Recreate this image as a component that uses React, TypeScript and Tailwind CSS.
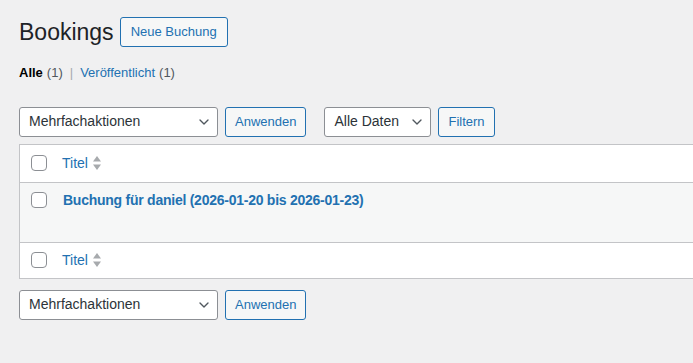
import { ChevronDown } from 'lucide-react'

const font = { fontFamily: '"Liberation Sans", Arial, sans-serif' }

function Select({ label, width }: { label: string; width: string }) {
  return (
    <div
      className={`${width} h-[30px] flex items-center justify-between bg-white border border-[#8c8f94] rounded-[3px] pl-[9px] pr-[5px] text-[14px] text-[#2c3338]`}
    >
      <span>{label}</span>
      <ChevronDown size={16} strokeWidth={2} className="text-[#50575e]" />
    </div>
  )
}

function Button({ label }: { label: string }) {
  return (
    <div className="h-[30px] flex items-center px-[9px] border border-[#2271b1] rounded-[3px] bg-[#f6f7f7] text-[13px] text-[#2271b1]">
      {label}
    </div>
  )
}

function Checkbox() {
  return <div className="w-4 h-4 rounded-[4px] border border-[#8c8f94] bg-white shrink-0" />
}

function SortIcon() {
  return (
    <svg width="10" height="16" viewBox="0 0 10 16" className="ml-[4px]">
      <path d="M5 1 L9 6.5 H1 Z" fill="#a7aaad" />
      <path d="M5 15 L9 9.5 H1 Z" fill="#a7aaad" />
    </svg>
  )
}

function HeaderRow({ top }: { top: boolean }) {
  return (
    <div
      className={`${top ? 'h-[38px] border-b' : 'h-[36px] border-t'} flex items-center pl-[11px] bg-white border-[#c3c4c7]`}
    >
      <Checkbox />
      <span className="ml-[15px] text-[14px] text-[#2271b1]">Titel</span>
      <SortIcon />
    </div>
  )
}

export default function App() {
  return (
    <div className="w-[693px] h-[363px] overflow-hidden bg-[#f0f0f1] text-[#1d2327]" style={font}>
      <div className="pl-[19px] pt-[17px]">
        <div className="flex items-center">
          <h1 className="text-[23px] leading-[29px] text-[#1d2327]">Bookings</h1>
          <div className="ml-[6px] h-[30px] flex items-center px-[10px] border border-[#2271b1] rounded-[3px] bg-[#f6f7f7] text-[13px] text-[#2271b1]">
            Neue Buchung
          </div>
        </div>

        <div className="mt-[16px] text-[13px] flex items-center">
          <span className="font-bold text-black">Alle</span>
          <span className="ml-1 text-[#50575e]">(1)</span>
          <span className="mx-[7px] text-[#a7aaad]">|</span>
          <span className="text-[#2271b1]">Veröffentlicht</span>
          <span className="ml-1 text-[#50575e]">(1)</span>
        </div>

        <div className="mt-[24px] flex items-center">
          <Select label="Mehrfachaktionen" width="w-[199px]" />
          <div className="ml-[7px]">
            <Button label="Anwenden" />
          </div>
          <div className="ml-[18px]">
            <Select label="Alle Daten" width="w-[107px]" />
          </div>
          <div className="ml-[7px]">
            <Button label="Filtern" />
          </div>
        </div>

        <div className="mt-[7px] w-[700px] border border-[#c3c4c7] bg-white">
          <HeaderRow top />
          <div className="h-[59px] bg-[#f6f7f7] flex items-start pl-[11px] pt-[9px]">
            <Checkbox />
            <span className="ml-[16px] -mt-[1px] text-[14px] font-bold tracking-[-0.25px] text-[#2271b1] leading-[18px]">
              Buchung für daniel (2026-01-20 bis 2026-01-23)
            </span>
          </div>
          <HeaderRow top={false} />
        </div>

        <div className="mt-[11px] flex items-center">
          <Select label="Mehrfachaktionen" width="w-[199px]" />
          <div className="ml-[7px]">
            <Button label="Anwenden" />
          </div>
        </div>
      </div>
    </div>
  )
}
